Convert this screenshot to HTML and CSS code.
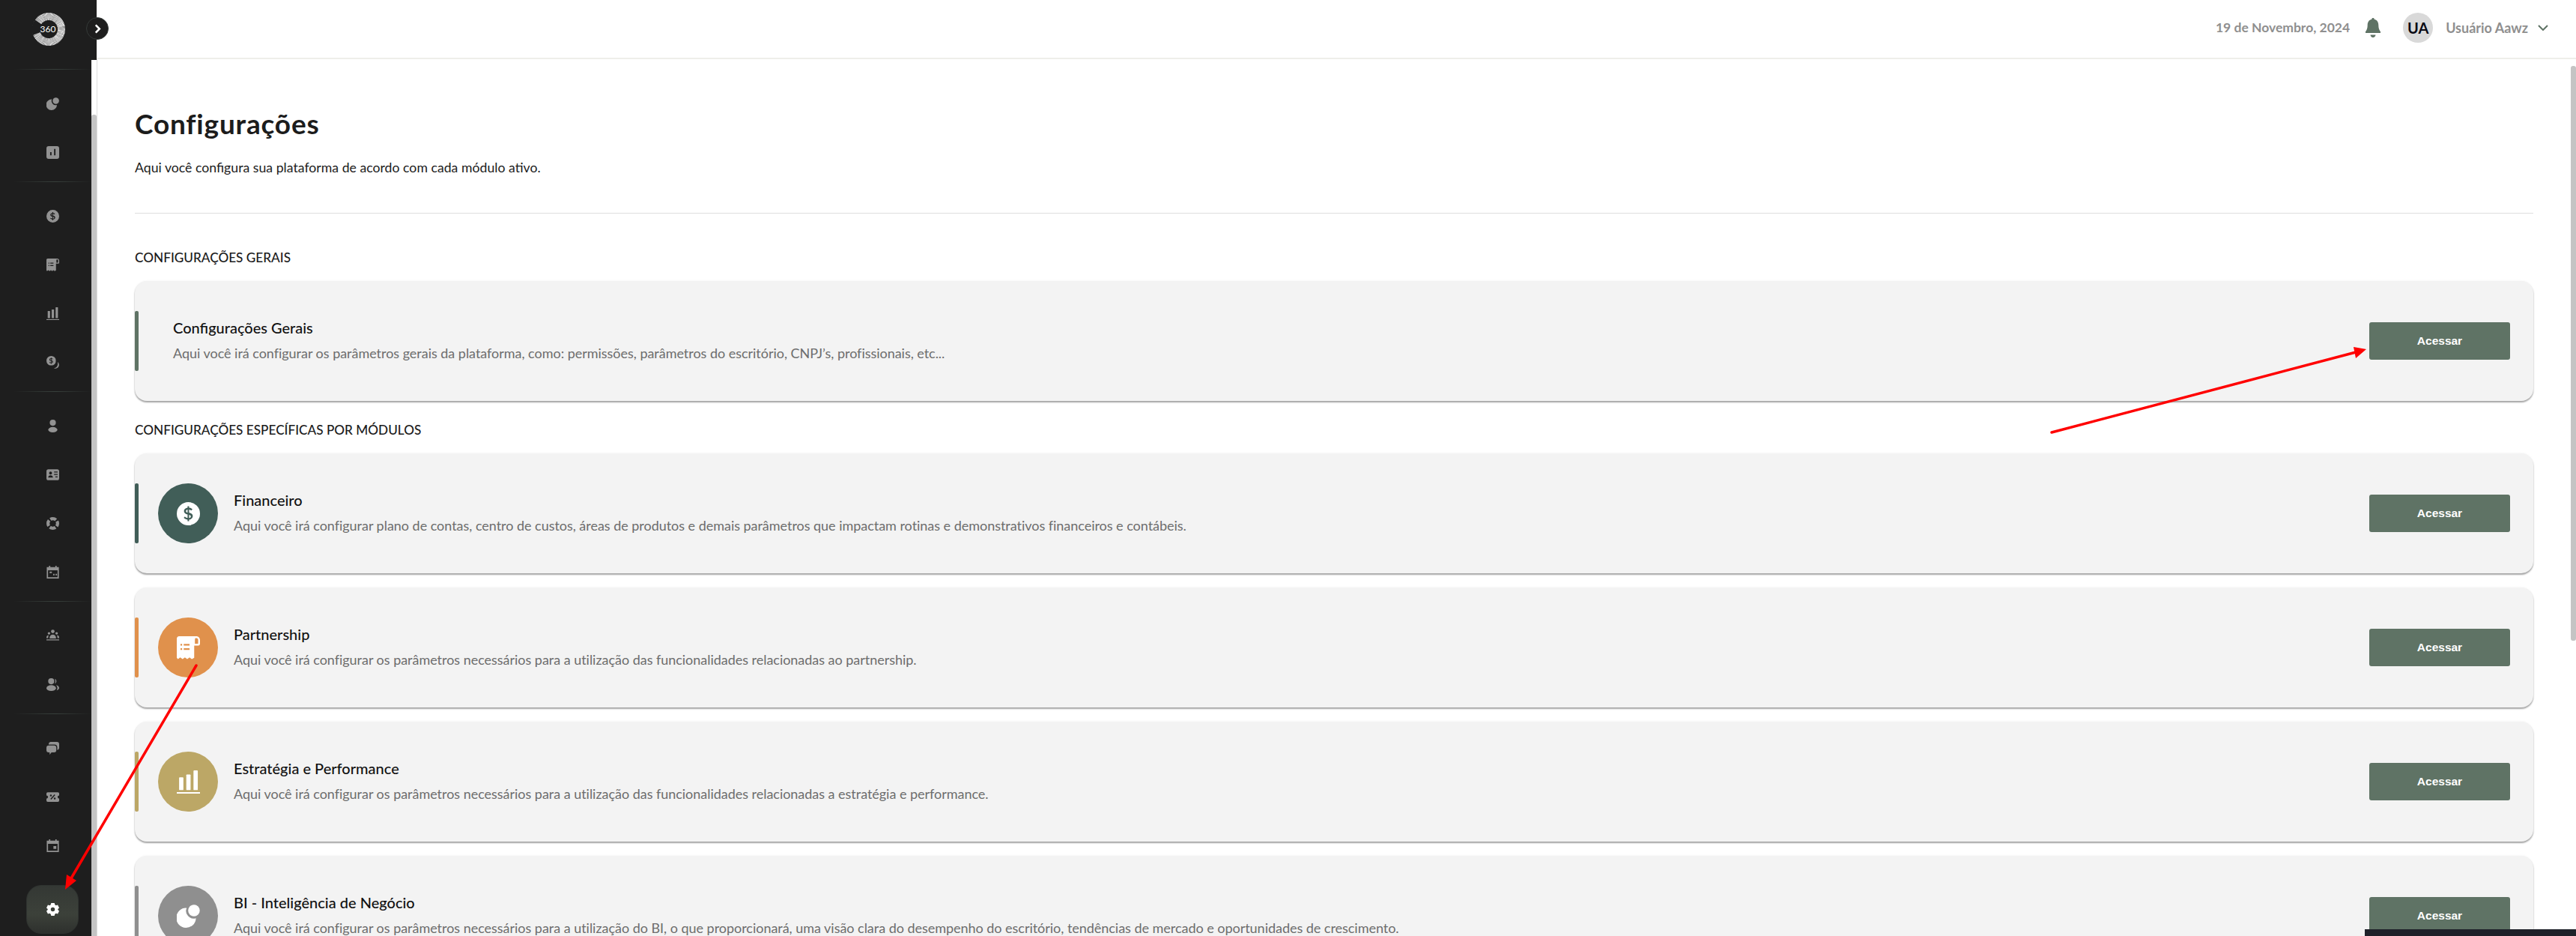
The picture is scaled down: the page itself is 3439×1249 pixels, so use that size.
FILE: index.html
```html
<!DOCTYPE html>
<html lang="pt-BR">
<head>
    <meta charset="UTF-8">
    <title>Configurações</title>
    <link rel="stylesheet" href="styles.css">
</head>
<body>

<svg width="0" height="0" class="sprites">
    <symbol id="i-pie" viewBox="0 0 20 20"><path d="M8.500 3A8.500 8.500 0 1 0 16.500 11.700A6.500 6.500 0 0 1 8.500 3z"/><circle cx="14.800" cy="5.200" r="5"/></symbol>
    <symbol id="i-dollar" viewBox="0 0 20 20"><path fill-rule="evenodd" d="M10 0a10 10 0 1 1 0 20 10 10 0 0 1 0-20zM9.300 3.600v1.300C7.500 5.100 6.200 6.200 6.200 7.800c0 1.800 1.400 2.500 3.100 2.900v2.900c-1-.1-1.800-.6-2.300-1.200l-1 1.200c.7.800 1.900 1.400 3.300 1.500v1.300h1.300v-1.300c2-.2 3.200-1.400 3.200-3.100 0-1.800-1.400-2.500-3.200-3V6.400c.8.100 1.400.4 1.900.900l1-1.200c-.7-.7-1.700-1.100-2.900-1.200V3.600zm0 5.400c-.9-.3-1.400-.6-1.400-1.300s.5-1.200 1.400-1.300zm1.300 2c1 .3 1.500.7 1.500 1.400s-.5 1.200-1.500 1.300z"/></symbol>
    <symbol id="i-receipt" viewBox="0 0 20 20"><path fill-rule="evenodd" d="M2 0H16.800C18.600 0 20 1.400 20 3.200V6.500C20 7.400 19.400 8 18.500 8H15V18.500L13 19.700 11 18.300 9 19.700 7 18.300 5 19.700 3 18.300 1 19.700 0 18.500V2C0 .9.900 0 2 0zM16 1.600C15.700 2 15.600 2.700 15.600 3.200V6.500H17.800C18.200 6.500 18.400 6.200 18.400 5.900V3.200C18.400 2.300 17.800 1.600 16.900 1.600zM3.200 6.600V8H4.600V6.600zM6 6.600V8H11V6.600zM3.200 10.300V11.700H4.600V10.300zM6 10.300V11.700H11V10.300z"/></symbol>
    <symbol id="i-bars" viewBox="0 0 20 20"><rect x="2" y="6" width="3.700" height="11" rx=".6"/><rect x="8.200" y="3.500" width="3.700" height="13.500" rx=".6"/><rect x="14.400" y="0" width="3.700" height="17" rx=".6"/><rect x="0" y="18.700" width="20" height="1.300"/></symbol>
    <symbol id="i-gear" viewBox="0 0 20 20"><path fill-rule="evenodd" d="M7.400 0h5.200l.7 2.700 1.700 1 2.700-.8L20 7.500l-2 1.900v1.200l2 1.900-2.300 4.600-2.700-.8-1.700 1-.7 2.700H7.400l-.7-2.700-1.700-1-2.700.8L0 12.500l2-1.900V9.400L0 7.500l2.300-4.600 2.700.8 1.700-1zM10 6.800a3.200 3.200 0 1 0 0 6.400 3.200 3.200 0 0 0 0-6.400z"/></symbol>
</svg>

<div class="layout">
    <aside class="sidebar">
        <div class="sidebar-top">
            <svg class="logo" viewBox="0 0 44 46">
                <circle class="logo-ring" cx="22" cy="23" r="17" pathLength="360"/>
                <circle class="logo-cut" cx="22" cy="23" r="17" pathLength="360"/>
                <text x="21" y="26.500" class="logo-text">360</text>
            </svg>
        </div>
        <div class="sidebar-toggle">
            <svg viewBox="0 0 12 14" width="11" height="13"><path d="M3 1.500 8.500 7 3 12.500" fill="none" stroke="#fff" stroke-width="2.800"/></svg>
        </div>
        <nav class="sidebar-nav">
            <div class="nav-group">
                <a class="nav-icon"><svg viewBox="0 0 20 20"><use href="#i-pie"/></svg></a>
                <a class="nav-icon"><svg viewBox="0 0 20 20"><path fill-rule="evenodd" d="M3.500 0h13A3.500 3.500 0 0 1 20 3.500v13a3.500 3.500 0 0 1-3.500 3.500h-13A3.500 3.500 0 0 1 0 16.500v-13A3.500 3.500 0 0 1 3.500 0zM12 4.500v10h2.200v-10zM5.800 9.500v5H8v-5z"/></svg></a>
            </div>
            <div class="nav-group">
                <a class="nav-icon"><svg viewBox="0 0 20 20"><use href="#i-dollar"/></svg></a>
                <a class="nav-icon"><svg viewBox="0 0 20 20"><use href="#i-receipt"/></svg></a>
                <a class="nav-icon"><svg viewBox="0 0 20 20"><use href="#i-bars"/></svg></a>
                <a class="nav-icon"><svg viewBox="0 0 20 20"><use href="#i-dollar" width="15" height="15"/><path d="M17.500 9.500c2.500 2 3 5.500 1.200 7.800-1.600 2.300-5 2.800-7 2.200 2.500-.4 4.800-2 5.600-4.400.6-1.900.6-3.800.2-5.600z"/></svg></a>
            </div>
            <div class="nav-group">
                <a class="nav-icon"><svg viewBox="0 0 20 20"><circle cx="10" cy="4.800" r="4.800"/><ellipse cx="10" cy="15.800" rx="7.200" ry="4.200"/></svg></a>
                <a class="nav-icon"><svg viewBox="0 0 20 20"><path fill-rule="evenodd" d="M3 1.500h14a3 3 0 0 1 3 3v11a3 3 0 0 1-3 3H3a3 3 0 0 1-3-3v-11a3 3 0 0 1 3-3zM6.500 5a2.300 2.300 0 1 0 0 4.600 2.300 2.300 0 0 0 0-4.600zM2.800 14.500h7.400c0-2-1.600-3.500-3.700-3.500s-3.700 1.500-3.700 3.500zM12 5v1.500h5.500V5zm0 3.800v1.500h5.500V8.800zm2 3.800v1.500h3.500v-1.500z"/></svg></a>
                <a class="nav-icon"><svg viewBox="0 0 20 20"><circle class="buoy" cx="10" cy="10" r="7.500" pathLength="360"/></svg></a>
                <a class="nav-icon"><svg viewBox="0 0 20 20"><path fill-rule="evenodd" d="M4 0h2v2h8V0h2v2h3.500v18H.5V2H4zM2.500 7v11h15V7zM5 9h3.500v2.500H5zm5.500 3.500h2.300V15h-2.300zm3.800 0h2.300V15h-2.300z"/></svg></a>
            </div>
            <div class="nav-group">
                <a class="nav-icon"><svg viewBox="0 0 20 20"><circle cx="10" cy="3" r="2.800"/><circle cx="4" cy="6" r="2"/><circle cx="16" cy="6" r="2"/><path d="M5 13c0-3 2.200-5 5-5s5 2 5 5v1H5zM0 12.500C0 10 1.500 8.800 3.500 9c-.5 1.200-.8 2.500-.8 4.500H0zM20 12.500c0-2.500-1.500-3.700-3.500-3.500.5 1.200.8 2.500.8 4.500H20zM0 15.500h20v1.500H0z"/></svg></a>
                <a class="nav-icon"><svg viewBox="0 0 20 20"><circle cx="7.500" cy="4.800" r="4.800"/><ellipse cx="7.500" cy="15.500" rx="7.500" ry="4.500"/><path d="M13 .8a4.300 4.300 0 0 1 0 8c1.500-2.500 1.500-5.500 0-8zM15 10.800c3 .5 5 2.300 5 4.500 0 1.700-1.800 3.200-4 3.700 2-2.500 1.500-6-1-8.200z"/></svg></a>
            </div>
            <div class="nav-group">
                <a class="nav-icon"><svg viewBox="0 0 20 20"><path d="M7 0h9.500A3.500 3.500 0 0 1 20 3.500V9c0 2-1.300 3.300-3 3.500V8.500A4.500 4.500 0 0 0 12.500 4H3.500A3.500 3.500 0 0 1 7 0z"/><path d="M3.500 5.500H12a3.500 3.500 0 0 1 3.500 3.500v4a3.500 3.500 0 0 1-3.500 3.500H8L5 20v-3.500H3.500A3.500 3.500 0 0 1 0 13V9a3.500 3.500 0 0 1 3.500-3.500z"/></svg></a>
                <a class="nav-icon"><svg viewBox="0 0 20 20"><path fill-rule="evenodd" d="M2 2.500h16a2 2 0 0 1 2 2v3a2.500 2.500 0 0 0 0 5v3a2 2 0 0 1-2 2H2a2 2 0 0 1-2-2v-3a2.500 2.500 0 0 0 0-5v-3a2 2 0 0 1 2-2zM12.500 6 6.200 13l1.300 1 6.300-7zM7 6.200a1.500 1.500 0 1 0 0 3 1.500 1.500 0 0 0 0-3zM13 10.800a1.500 1.500 0 1 0 0 3 1.500 1.500 0 0 0 0-3z"/></svg></a>
                <a class="nav-icon"><svg viewBox="0 0 20 20"><path fill-rule="evenodd" d="M4 0h2v2h8V0h2v2h3.500v18H.5V2H4zM2.500 7v11h15V7zM11 10.500h4.500V15H11z"/></svg></a>
            </div>
        </nav>
        <div class="sidebar-settings">
            <svg viewBox="0 0 20 20" class="settings-icon"><use href="#i-gear"/></svg>
        </div>
    </aside>

    <div class="sidebar-scroll"><div class="sidebar-thumb"></div></div>

    <div class="page">
        <header class="topbar">
            <span class="topbar-date">19 de Novembro, 2024</span>
            <svg class="topbar-bell" viewBox="0 0 20 26"><path d="M10 0c1 0 1.700.7 1.800 1.700 3.700.9 5.500 4 5.500 7.800 0 4 .9 6.500 2.700 8.700v1.800H0v-1.800c1.800-2.200 2.700-4.700 2.700-8.700 0-3.800 1.800-6.900 5.500-7.800C8.300.7 9 0 10 0zM6.500 22.500h7C13.300 24.500 11.800 26 10 26s-3.300-1.500-3.500-3.500z"/></svg>
            <div class="topbar-avatar">UA</div>
            <span class="topbar-user">Usuário Aawz</span>
            <svg class="topbar-chevron" viewBox="0 0 14 8"><path d="M1 1l6 6 6-6" fill="none" stroke="#5f7365" stroke-width="2"/></svg>
        </header>

        <main class="content">
            <h1>Configurações</h1>
            <p class="subtitle">Aqui você configura sua plataforma de acordo com cada módulo ativo.</p>
            <hr class="divider">

            <h2 class="section-title">CONFIGURAÇÕES GERAIS</h2>
            <div class="card card-general">
                <span class="card-bar"></span>
                <div class="card-text">
                    <h3>Configurações Gerais</h3>
                    <p>Aqui você irá configurar os parâmetros gerais da plataforma, como: permissões, parâmetros do escritório, CNPJ’s, profissionais, etc...</p>
                </div>
                <button class="btn">Acessar</button>
            </div>

            <h2 class="section-title section-modules">CONFIGURAÇÕES ESPECÍFICAS POR MÓDULOS</h2>
            <div class="card card-fin">
                <span class="card-bar"></span>
                <span class="card-circle"><svg viewBox="0 0 20 20" class="icon-dollar"><use href="#i-dollar"/></svg></span>
                <div class="card-text">
                    <h3>Financeiro</h3>
                    <p>Aqui você irá configurar plano de contas, centro de custos, áreas de produtos e demais parâmetros que impactam rotinas e demonstrativos financeiros e contábeis.</p>
                </div>
                <button class="btn">Acessar</button>
            </div>
            <div class="card card-part">
                <span class="card-bar"></span>
                <span class="card-circle"><svg viewBox="0 0 20 20"><use href="#i-receipt"/></svg></span>
                <div class="card-text">
                    <h3>Partnership</h3>
                    <p>Aqui você irá configurar os parâmetros necessários para a utilização das funcionalidades relacionadas ao partnership.</p>
                </div>
                <button class="btn">Acessar</button>
            </div>
            <div class="card card-est">
                <span class="card-bar"></span>
                <span class="card-circle"><svg viewBox="0 0 20 20"><use href="#i-bars"/></svg></span>
                <div class="card-text">
                    <h3>Estratégia e Performance</h3>
                    <p>Aqui você irá configurar os parâmetros necessários para a utilização das funcionalidades relacionadas a estratégia e performance.</p>
                </div>
                <button class="btn">Acessar</button>
            </div>
            <div class="card card-bi">
                <span class="card-bar"></span>
                <span class="card-circle"><svg viewBox="0 0 20 20"><use href="#i-pie"/></svg></span>
                <div class="card-text">
                    <h3>BI - Inteligência de Negócio</h3>
                    <p>Aqui você irá configurar os parâmetros necessários para a utilização do BI, o que proporcionará, uma visão clara do desempenho do escritório, tendências de mercado e oportunidades de crescimento.</p>
                </div>
                <button class="btn">Acessar</button>
            </div>
        </main>
    </div>
</div>

<div class="page-scroll"></div>
<div class="taskbar-edge"></div>

<!-- setas vermelhas da anotação -->
<svg class="arrows" viewBox="0 0 3439 1249">
    <g stroke="#f00" stroke-width="3.500" stroke-linecap="round" fill="#f00">
        <line x1="2739" y1="577" x2="3145" y2="470"/>
        <line x1="262" y1="888" x2="95" y2="1172"/>
    </g>
    <path d="M3159 466 3145 478 3142 463z" fill="#f00"/>
    <path d="M87 1187 89 1167 102 1175z" fill="#f00"/>
</svg>

</body>
</html>
```

FILE: styles.css
```css
* {
    box-sizing: border-box;
}
html, body {
    margin: 0;
    padding: 0;
    height: 100%;
    overflow: hidden;
}
body {
    font-family: Lato, "Open Sans", sans-serif;
    background: white;
    color: #1c1c1c;
}
.sprites {
    position: absolute;
}
.layout {
    display: flex;
    height: 1249px;
}

/* sidebar */
.sidebar {
    width: 122px;
    background: #1e1e1e;
    display: flex;
    flex-direction: column;
    position: relative;
    flex-shrink: 0;
}
.sidebar-top {
    width: 129px;
    height: 92px;
    padding: 16px 0 0 43px;
    position: relative;
    z-index: 2;
    background: linear-gradient(to bottom, #1e1e1e 80px, transparent 80px);
}
.logo {
    width: 44px;
    height: 46px;
    display: block;
}
.logo-ring {
    fill: none;
    stroke: #fff;
    stroke-width: 10;
    stroke-dasharray: 2.400 1;
}
.logo-cut {
    fill: none;
    stroke: #1e1e1e;
    stroke-width: 11;
    stroke-dasharray: 55 305;
    stroke-dashoffset: -160;
}
.logo-text {
    fill: #fff;
    font-size: 12px;
    text-anchor: middle;
    font-family: Lato, sans-serif;
}
.sidebar-toggle {
    position: absolute;
    left: 115px;
    top: 23px;
    width: 30px;
    height: 30px;
    border-radius: 50%;
    background: #1e1e1e;
    border: 1px solid #353a38;
    display: flex;
    align-items: center;
    justify-content: center;
    z-index: 3;
}
.sidebar-nav {
    flex: 1;
}
.nav-group {
    border-top: 1px solid;
    border-image: linear-gradient(to right, transparent 15%, #38403c 60%, transparent 100%) 1;
    padding: 13px 0 6px;
}
.nav-icon {
    display: flex;
    height: 65px;
    align-items: center;
    justify-content: center;
    padding-left: 18px;
}
.nav-icon svg {
    width: 17px;
    height: 17px;
    fill: #929292;
}
.buoy {
    fill: none;
    stroke: #929292;
    stroke-width: 5;
    stroke-dasharray: 72 18;
    stroke-dashoffset: 36;
}
.sidebar-settings {
    position: absolute;
    left: 35px;
    top: 1181px;
    width: 70px;
    height: 65px;
    border-radius: 20px;
    background: linear-gradient(to bottom, #343834, #3c413a 60%, #2e302d);
    border: 1px solid #2f3330;
    display: flex;
    align-items: center;
    justify-content: center;
}
.settings-icon {
    width: 17px;
    height: 17px;
    fill: white;
}

.sidebar-scroll {
    width: 7px;
    flex-shrink: 0;
    padding-top: 153px;
    background: white;
}
.sidebar-thumb {
    height: 100%;
    background: #c4c4c4;
    border-radius: 3px 3px 0 0;
}

/* page */
.page {
    flex: 1;
    border-left: 1px solid #dedede;
    min-width: 0;
}
.topbar {
    height: 79px;
    border-bottom: 2px solid #eeeeea;
    display: flex;
    align-items: center;
    padding: 0 37px 4px 0;
    justify-content: flex-end;
    margin-left: -1px;
    background: white;
}
.topbar-date {
    font-size: 17.500px;
    font-weight: 700;
    color: #8f8f8f;
    margin-right: 21px;
}
.topbar-bell {
    width: 20px;
    height: 26px;
    fill: #5f7365;
    margin-right: 30px;
}
.topbar-avatar {
    width: 40px;
    height: 40px;
    border-radius: 50%;
    background: #d9d9d9;
    color: #0a0a14;
    font-size: 20px;
    font-weight: 700;
    display: flex;
    align-items: center;
    justify-content: center;
    margin-right: 17px;
}
.topbar-user {
    font-size: 18px;
    font-weight: 700;
    color: #8f8f8f;
    margin-right: 13px;
}
.topbar-chevron {
    width: 14px;
    height: 8px;
}
.content {
    padding: 0 57px 0 50px;
}
h1 {
    font-size: 37px;
    font-weight: 700;
    letter-spacing: .8px;
    line-height: 44px;
    margin: 0;
    padding-top: 64px;
    height: 134px;
}
.subtitle {
    font-size: 17.700px;
    line-height: 22px;
    margin: 0;
    height: 71px;
}
.divider {
    border: 0;
    border-top: 1px solid #dfdfdf;
    margin: 0;
}
.section-title {
    font-size: 17.200px;
    font-weight: 500;
    line-height: 22px;
    margin: 48px 0 20px;
}
.section-modules {
    margin: 28px 0 20px;
}
.card {
    height: 160px;
    background: #f3f3f3;
    border-radius: 16px;
    box-shadow: 0 2px 2px rgba(0, 0, 0, 0.35), 0 0 3px rgba(0, 0, 0, 0.06);
    display: flex;
    align-items: center;
    padding: 0 31px 0 0;
    margin-bottom: 19px;
    position: relative;
}
.card-general {
    padding-left: 51px;
}
.card-bar {
    position: absolute;
    left: 0;
    top: 40px;
    width: 5px;
    height: 80px;
    border-radius: 2px;
}
.card-circle {
    width: 80px;
    height: 80px;
    border-radius: 50%;
    margin: 0 21px 0 31px;
    flex-shrink: 0;
    display: flex;
    align-items: center;
    justify-content: center;
}
.card-circle svg {
    width: 31px;
    height: 31px;
    fill: white;
}
.card-text {
    flex: 1;
    min-width: 0;
    padding-bottom: 2px;
}
.card-text h3 {
    font-size: 20px;
    font-weight: 500;
    line-height: 24px;
    margin: 0 0 10px;
    color: #111;
}
.card-text p {
    font-size: 18px;
    letter-spacing: -.03px;
    line-height: 24px;
    margin: 0;
    color: #6d6d6d;
}
.btn {
    width: 188px;
    height: 50px;
    border: 0;
    border-radius: 3px;
    background: #5f7365;
    color: white;
    font-family: "Liberation Sans", Arial, sans-serif;
    font-weight: 700;
    font-size: 15.500px;
    flex-shrink: 0;
}
.card-general .card-bar {
    background: #5f7365;
}
.card-fin .card-bar, .card-fin .card-circle {
    background: #415e58;
}
.card-part .card-bar, .card-part .card-circle {
    background: #e0914c;
}
.card-est .card-bar, .card-est .card-circle {
    background: #bca766;
}
.card-bi .card-bar, .card-bi .card-circle {
    background: #8f8f8f;
}
.page-scroll {
    position: absolute;
    right: 0;
    top: 88px;
    width: 7px;
    height: 767px;
    background: #c4c4c4;
    border-radius: 3px;
}
.taskbar-edge {
    position: absolute;
    right: 0;
    bottom: 0;
    width: 282px;
    height: 9px;
    background: #1e2129;
}
.arrows {
    position: absolute;
    left: 0;
    top: 0;
    width: 3439px;
    height: 1249px;
    pointer-events: none;
}
```
